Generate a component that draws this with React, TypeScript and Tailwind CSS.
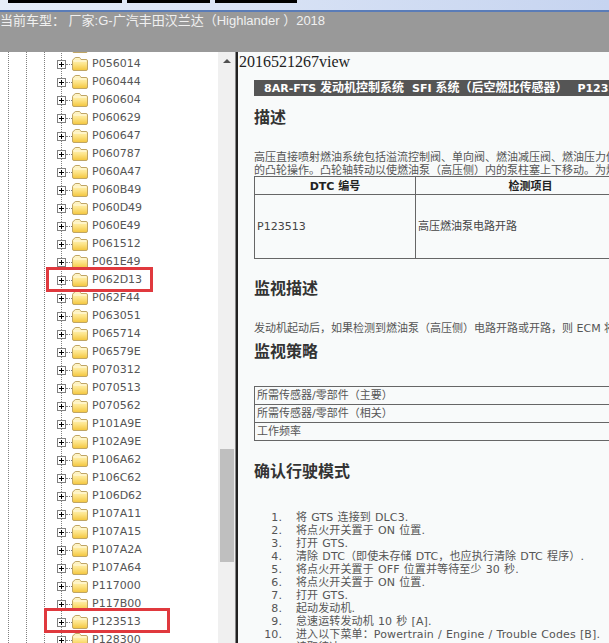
import React from "react";

const codes = [
  "P055A12", "P056014", "P060444", "P060604", "P060629", "P060647", "P060787", "P060A47", "P060B49",
  "P060D49", "P060E49", "P061512", "P061E49", "P062D13", "P062F44", "P063051", "P065714", "P06579E",
  "P070312", "P070513", "P070562", "P101A9E", "P102A9E", "P106A62", "P106C62", "P106D62", "P107A11",
  "P107A15", "P107A2A", "P107A64", "P117000", "P117B00", "P123513", "P128300",
];

const steps = [
  "将 GTS 连接到 DLC3.",
  "将点火开关置于 ON 位置.",
  "打开 GTS.",
  "清除 DTC（即使未存储 DTC，也应执行清除 DTC 程序）.",
  "将点火开关置于 OFF 位置并等待至少 30 秒.",
  "将点火开关置于 ON 位置.",
  "打开 GTS.",
  "起动发动机.",
  "怠速运转发动机 10 秒 [A].",
  "进入以下菜单：Powertrain / Engine / Trouble Codes [B].",
  "读取待决 DTC.",
];

const Folder = () => (
  <svg width="16" height="14" viewBox="0 0 16 14" className="shrink-0">
    <defs>
      <linearGradient id="folderFill" x1="0" y1="0" x2="0" y2="1">
        <stop offset="0" stopColor="#fff8d2" />
        <stop offset="0.5" stopColor="#fde58a" />
        <stop offset="1" stopColor="#f3c53c" />
      </linearGradient>
    </defs>
    <path
      d="M0.5 3.5 Q0.5 2.5 1.5 2.5 L2.5 1 Q3 0.5 4 0.5 L7 0.5 Q8 0.5 8.5 1.5 L9 2.5 L14 2.5 Q15.5 2.5 15.5 4 L15.5 12 Q15.5 13.5 14 13.5 L2 13.5 Q0.5 13.5 0.5 12 Z"
      fill="url(#folderFill)"
      stroke="#bfa565"
    />
    <path d="M1.5 4 L14.5 4" stroke="#fffbe6" />
  </svg>
);

const PlusBox = () => (
  <div className="relative w-[9px] h-[9px] shrink-0 -ml-[5px] border border-[#808080] bg-white">
    <div className="absolute left-[1px] right-[1px] top-[3px] h-px bg-black" />
    <div className="absolute top-[1px] bottom-[1px] left-[3px] w-px bg-black" />
  </div>
);

const TreeRow = ({ code }: { code: string }) => (
  <div className="flex items-center h-[18px]">
    <PlusBox />
    <div className="w-[6px] border-t border-dotted border-[#808080] shrink-0" />
    <Folder />
    <span className="ml-[4px] text-[11px] text-[#555] whitespace-nowrap">{code}</span>
  </div>
);

const Heading = ({ children, className }: { children: React.ReactNode; className: string }) => (
  <h2 className={`text-[16px] leading-[20px] font-bold text-[#333] whitespace-nowrap ${className}`}>{children}</h2>
);

export default function App() {
  return (
    <div className="relative w-[609px] h-[643px] overflow-hidden bg-white font-['DejaVu_Sans','Noto_Sans_CJK_SC',sans-serif]">
      {/* window top */}
      <div className="h-[10px] bg-gradient-to-r from-[#e6edf8] to-[#c6d4f0] flex gap-[5px] pl-[8px] items-start">
        <div className="w-[114px] h-[3px] bg-black" />
        <div className="w-[83px] h-[3px] bg-black" />
        <div className="w-[82px] h-[3px] bg-black" />
      </div>
      <div className="h-[2px] bg-[#5a7cb8]" />
      <div className="h-[40px] bg-[#999999] text-[13px] leading-[16px] text-[#f0f0f0] whitespace-nowrap pt-[1px] font-['Liberation_Sans','Noto_Sans_CJK_SC',sans-serif]">
        当前车型：&nbsp;厂家:G-广汽丰田汉兰达（Highlander ）2018
      </div>

      <div className="flex h-[591px]">
        {/* tree */}
        <div className="w-[218px] shrink-0 overflow-hidden flex pl-[8px]">
          <div className="w-[18px] shrink-0 border-l border-dotted border-[#808080]" />
          <div className="w-[18px] shrink-0 border-l border-dotted border-[#808080]" />
          <div className="w-[17px] shrink-0 border-l border-dotted border-[#808080]" />
          <div className="border-l border-dotted border-[#808080] -mt-[16px] h-[620px] pt-px">
            {codes.map((code) => (
              <TreeRow key={code} code={code} />
            ))}
          </div>
        </div>

        {/* scrollbar */}
        <div className="w-[17px] shrink-0 bg-[#f0f0f0] flex flex-col items-center">
          <div className="mt-[7px] w-0 h-0 border-x-[4px] border-x-transparent border-b-[4px] border-b-[#505050]" />
          <div className="mt-[386px] w-[14px] h-[113px] bg-[#bfbfbf]" />
        </div>
        <div className="w-px shrink-0 bg-[#888]" />
        <div className="w-[2px] shrink-0 bg-[#222]" />

        {/* content */}
        <div className="flex-1 min-w-0 overflow-hidden bg-[#f8fafa]">
          <div className="pl-px text-[16px] leading-[18px] mt-px text-[#222] font-['Liberation_Serif',serif]">2016521267view</div>
          <div className="ml-[16px] w-[700px] pl-[10px] mt-[9px] h-[16px] bg-[#555] text-white text-[11px] leading-[16px] font-bold whitespace-nowrap">
            8AR-FTS <span className="text-[12px]">发动机控制系统</span>
            <span className="ml-[8px]">SFI</span> <span className="text-[12px]">系统（后空燃比传感器）</span>
            <span className="ml-[10px]">P123513</span>
          </div>

          <div className="pl-[16px]">
            <Heading className="mt-[12px]">描述</Heading>
            <div className="mt-[23px] text-[11px] leading-[13px] text-[#555] whitespace-nowrap">
              <p>高压直接喷射燃油系统包括溢流控制阀、单向阀、燃油减压阀、燃油压力传感器</p>
              <p>的凸轮操作。凸轮轴转动以使燃油泵（高压侧）内的泵柱塞上下移动。为燃油</p>
            </div>
            <table className="mt-[-1px] w-[700px] table-fixed border-collapse text-[11px] leading-[13px] text-[#444]">
              <tbody>
                <tr className="h-[18px]">
                  <th className="w-[161px] border border-[#666] font-bold text-[#222] pt-px">DTC 编号</th>
                  <th className="w-[230px] border border-[#666] font-bold text-[#222] pt-px">检测项目</th>
                  <th className="border border-[#666]" />
                </tr>
                <tr className="h-[64px]">
                  <td className="border border-[#666] pl-[2px]">P123513</td>
                  <td className="border border-[#666] pl-[2px]">高压燃油泵电路开路</td>
                  <td className="border border-[#666]" />
                </tr>
              </tbody>
            </table>

            <Heading className="mt-[20px]">监视描述</Heading>
            <p className="mt-[23px] text-[11px] leading-[13px] text-[#555] whitespace-nowrap">
              发动机起动后，如果检测到燃油泵（高压侧）电路开路或开路，则 ECM 将存储
            </p>
            <Heading className="mt-[7px]">监视策略</Heading>
            <table className="mt-[24px] w-[700px] table-fixed border-collapse text-[11px] leading-[13px] text-[#555]">
              <tbody>
                <tr className="h-[18px]">
                  <td className="border border-[#666] pl-[2px]">所需传感器/零部件（主要）</td>
                </tr>
                <tr className="h-[18px]">
                  <td className="border border-[#666] pl-[2px]">所需传感器/零部件（相关）</td>
                </tr>
                <tr className="h-[18px]">
                  <td className="border border-[#666] pl-[2px]">工作频率</td>
                </tr>
              </tbody>
            </table>

            <Heading className="mt-[21px]">确认行驶模式</Heading>
            <ol className="mt-[29px] text-[11px] leading-[13px] text-[#555] tracking-[0.12px] [word-spacing:0.5px]">
              {steps.map((step, i) => (
                <li key={step + i} className="flex whitespace-nowrap">
                  <span className="w-[28px] text-right shrink-0">{i + 1}.</span>
                  <span className="ml-[14px]">{step}</span>
                </li>
              ))}
            </ol>
          </div>
        </div>
      </div>

      {/* red annotation boxes */}
      <div className="absolute left-[46px] top-[267px] w-[107px] h-[25px] border-[3px] border-[#e0393e]" />
      <div className="absolute left-[44px] top-[608px] w-[126px] h-[25px] border-[3px] border-[#e0393e]" />
    </div>
  );
}
